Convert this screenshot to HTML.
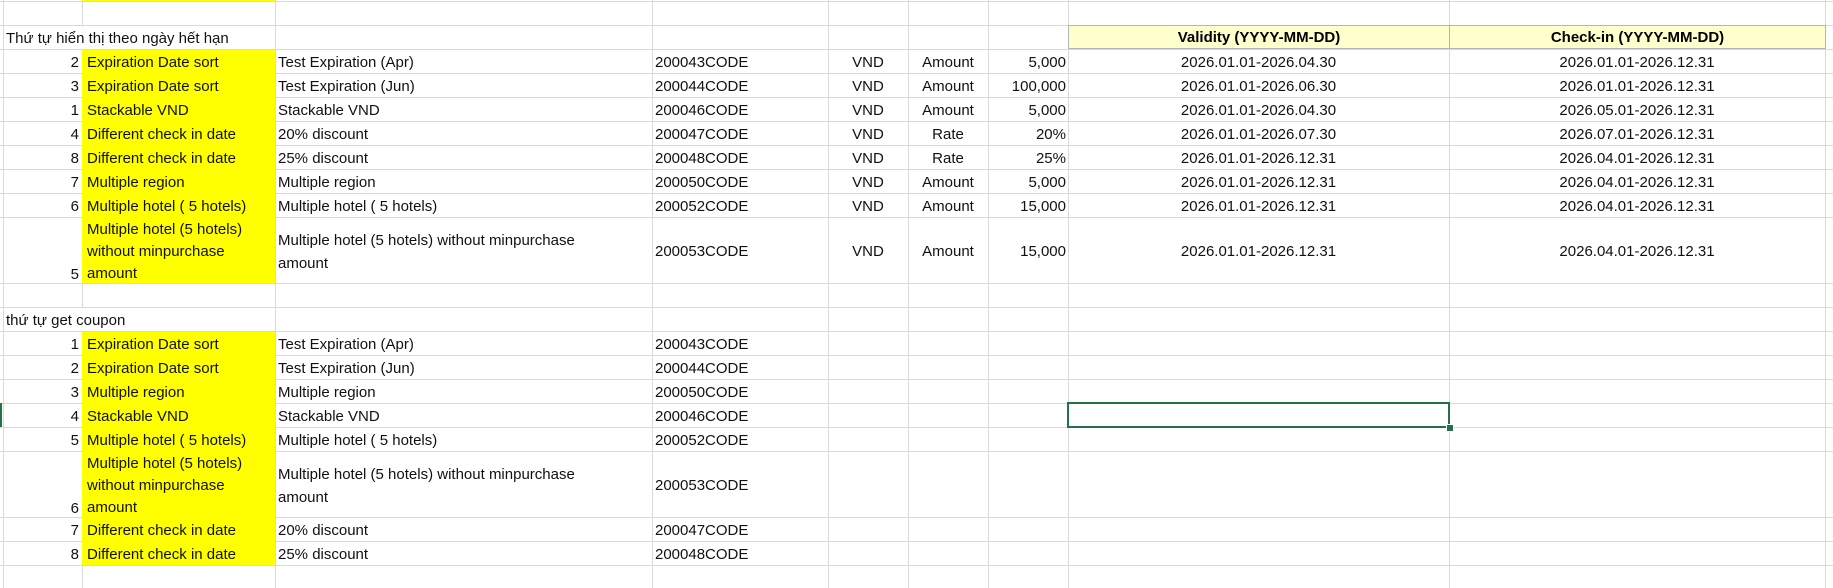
<!DOCTYPE html>
<html><head><meta charset="utf-8">
<style>
html,body{margin:0;padding:0;background:#fff;}
body{width:1833px;height:588px;position:relative;overflow:hidden;font-family:"Liberation Sans",Arial,sans-serif;font-size:15px;color:#000;}
.h{position:absolute;left:0;width:1833px;height:1px;background:#d9d9d9;}
.v{position:absolute;width:1px;background:#d9d9d9;}
.y{position:absolute;left:82px;width:193px;background:#ffff00;}
.t{position:absolute;height:24px;line-height:24px;white-space:nowrap;margin-top:2px;color:#111;}
.r{text-align:right;}
.c{text-align:center;}
.hd{position:absolute;top:25px;height:24px;background:#ffffcc;border:1px solid #b4b4b4;box-sizing:border-box;font-weight:bold;text-align:center;line-height:24px;}
</style></head><body>
<div class="h" style="top:1px"></div>
<div class="h" style="top:25px"></div>
<div class="h" style="top:49px"></div>
<div class="h" style="top:73px"></div>
<div class="h" style="top:97px"></div>
<div class="h" style="top:121px"></div>
<div class="h" style="top:145px"></div>
<div class="h" style="top:169px"></div>
<div class="h" style="top:193px"></div>
<div class="h" style="top:217px"></div>
<div class="h" style="top:283px"></div>
<div class="h" style="top:307px"></div>
<div class="h" style="top:331px"></div>
<div class="h" style="top:355px"></div>
<div class="h" style="top:379px"></div>
<div class="h" style="top:403px"></div>
<div class="h" style="top:427px"></div>
<div class="h" style="top:451px"></div>
<div class="h" style="top:517px"></div>
<div class="h" style="top:541px"></div>
<div class="h" style="top:565px"></div>
<div class="v" style="left:3px;top:0;height:588px"></div>
<div class="v" style="left:82px;top:0;height:25px"></div>
<div class="v" style="left:82px;top:49px;height:258px"></div>
<div class="v" style="left:82px;top:331px;height:257px"></div>
<div class="v" style="left:275px;top:0;height:588px"></div>
<div class="v" style="left:652px;top:0;height:588px"></div>
<div class="v" style="left:828px;top:0;height:588px"></div>
<div class="v" style="left:908px;top:0;height:588px"></div>
<div class="v" style="left:988px;top:0;height:588px"></div>
<div class="v" style="left:1068px;top:0;height:588px"></div>
<div class="v" style="left:1449px;top:0;height:588px"></div>
<div class="v" style="left:1825px;top:0;height:588px"></div>
<div class="y" style="top:0;height:1px"></div>
<div class="y" style="top:50px;height:233px"></div>
<div class="y" style="top:332px;height:233px"></div>
<div class="hd" style="left:1068px;width:382px">Validity (YYYY-MM-DD)</div>
<div class="hd" style="left:1449px;width:377px">Check-in (YYYY-MM-DD)</div>

<div class="t" style="left:6px;top:25px">Thứ tự hiển thị theo ngày hết hạn</div>
<div class="t" style="left:6px;top:307px">thứ tự get coupon</div>

<div class="t r" style="left:3px;width:76px;top:49px">2</div>
<div class="t" style="left:87px;top:49px">Expiration Date sort</div>
<div class="t" style="left:278px;top:49px">Test Expiration (Apr)</div>
<div class="t" style="left:655px;top:49px">200043CODE</div>
<div class="t c" style="left:828px;width:80px;top:49px">VND</div>
<div class="t c" style="left:908px;width:80px;top:49px">Amount</div>
<div class="t r" style="left:988px;width:78px;top:49px">5,000</div>
<div class="t c" style="left:1068px;width:381px;top:49px">2026.01.01-2026.04.30</div>
<div class="t c" style="left:1449px;width:376px;top:49px">2026.01.01-2026.12.31</div>

<div class="t r" style="left:3px;width:76px;top:73px">3</div>
<div class="t" style="left:87px;top:73px">Expiration Date sort</div>
<div class="t" style="left:278px;top:73px">Test Expiration (Jun)</div>
<div class="t" style="left:655px;top:73px">200044CODE</div>
<div class="t c" style="left:828px;width:80px;top:73px">VND</div>
<div class="t c" style="left:908px;width:80px;top:73px">Amount</div>
<div class="t r" style="left:988px;width:78px;top:73px">100,000</div>
<div class="t c" style="left:1068px;width:381px;top:73px">2026.01.01-2026.06.30</div>
<div class="t c" style="left:1449px;width:376px;top:73px">2026.01.01-2026.12.31</div>

<div class="t r" style="left:3px;width:76px;top:97px">1</div>
<div class="t" style="left:87px;top:97px">Stackable VND</div>
<div class="t" style="left:278px;top:97px">Stackable VND</div>
<div class="t" style="left:655px;top:97px">200046CODE</div>
<div class="t c" style="left:828px;width:80px;top:97px">VND</div>
<div class="t c" style="left:908px;width:80px;top:97px">Amount</div>
<div class="t r" style="left:988px;width:78px;top:97px">5,000</div>
<div class="t c" style="left:1068px;width:381px;top:97px">2026.01.01-2026.04.30</div>
<div class="t c" style="left:1449px;width:376px;top:97px">2026.05.01-2026.12.31</div>

<div class="t r" style="left:3px;width:76px;top:121px">4</div>
<div class="t" style="left:87px;top:121px">Different check in date</div>
<div class="t" style="left:278px;top:121px">20% discount</div>
<div class="t" style="left:655px;top:121px">200047CODE</div>
<div class="t c" style="left:828px;width:80px;top:121px">VND</div>
<div class="t c" style="left:908px;width:80px;top:121px">Rate</div>
<div class="t r" style="left:988px;width:78px;top:121px">20%</div>
<div class="t c" style="left:1068px;width:381px;top:121px">2026.01.01-2026.07.30</div>
<div class="t c" style="left:1449px;width:376px;top:121px">2026.07.01-2026.12.31</div>

<div class="t r" style="left:3px;width:76px;top:145px">8</div>
<div class="t" style="left:87px;top:145px">Different check in date</div>
<div class="t" style="left:278px;top:145px">25% discount</div>
<div class="t" style="left:655px;top:145px">200048CODE</div>
<div class="t c" style="left:828px;width:80px;top:145px">VND</div>
<div class="t c" style="left:908px;width:80px;top:145px">Rate</div>
<div class="t r" style="left:988px;width:78px;top:145px">25%</div>
<div class="t c" style="left:1068px;width:381px;top:145px">2026.01.01-2026.12.31</div>
<div class="t c" style="left:1449px;width:376px;top:145px">2026.04.01-2026.12.31</div>

<div class="t r" style="left:3px;width:76px;top:169px">7</div>
<div class="t" style="left:87px;top:169px">Multiple region</div>
<div class="t" style="left:278px;top:169px">Multiple region</div>
<div class="t" style="left:655px;top:169px">200050CODE</div>
<div class="t c" style="left:828px;width:80px;top:169px">VND</div>
<div class="t c" style="left:908px;width:80px;top:169px">Amount</div>
<div class="t r" style="left:988px;width:78px;top:169px">5,000</div>
<div class="t c" style="left:1068px;width:381px;top:169px">2026.01.01-2026.12.31</div>
<div class="t c" style="left:1449px;width:376px;top:169px">2026.04.01-2026.12.31</div>

<div class="t r" style="left:3px;width:76px;top:193px">6</div>
<div class="t" style="left:87px;top:193px">Multiple hotel ( 5 hotels)</div>
<div class="t" style="left:278px;top:193px">Multiple hotel ( 5 hotels)</div>
<div class="t" style="left:655px;top:193px">200052CODE</div>
<div class="t c" style="left:828px;width:80px;top:193px">VND</div>
<div class="t c" style="left:908px;width:80px;top:193px">Amount</div>
<div class="t r" style="left:988px;width:78px;top:193px">15,000</div>
<div class="t c" style="left:1068px;width:381px;top:193px">2026.01.01-2026.12.31</div>
<div class="t c" style="left:1449px;width:376px;top:193px">2026.04.01-2026.12.31</div>

<div class="t r" style="left:3px;width:76px;top:261px">5</div>
<div class="t" style="left:87px;top:217px;height:66px;line-height:22px">Multiple hotel (5 hotels)<br>without minpurchase<br>amount</div>
<div class="t" style="left:278px;top:227px;height:46px;line-height:23px">Multiple hotel (5 hotels) without minpurchase<br>amount</div>
<div class="t" style="left:655px;top:238px">200053CODE</div>
<div class="t c" style="left:828px;width:80px;top:238px">VND</div>
<div class="t c" style="left:908px;width:80px;top:238px">Amount</div>
<div class="t r" style="left:988px;width:78px;top:238px">15,000</div>
<div class="t c" style="left:1068px;width:381px;top:238px">2026.01.01-2026.12.31</div>
<div class="t c" style="left:1449px;width:376px;top:238px">2026.04.01-2026.12.31</div>

<div class="t r" style="left:3px;width:76px;top:331px">1</div>
<div class="t" style="left:87px;top:331px">Expiration Date sort</div>
<div class="t" style="left:278px;top:331px">Test Expiration (Apr)</div>
<div class="t" style="left:655px;top:331px">200043CODE</div>

<div class="t r" style="left:3px;width:76px;top:355px">2</div>
<div class="t" style="left:87px;top:355px">Expiration Date sort</div>
<div class="t" style="left:278px;top:355px">Test Expiration (Jun)</div>
<div class="t" style="left:655px;top:355px">200044CODE</div>

<div class="t r" style="left:3px;width:76px;top:379px">3</div>
<div class="t" style="left:87px;top:379px">Multiple region</div>
<div class="t" style="left:278px;top:379px">Multiple region</div>
<div class="t" style="left:655px;top:379px">200050CODE</div>

<div class="t r" style="left:3px;width:76px;top:403px">4</div>
<div class="t" style="left:87px;top:403px">Stackable VND</div>
<div class="t" style="left:278px;top:403px">Stackable VND</div>
<div class="t" style="left:655px;top:403px">200046CODE</div>

<div class="t r" style="left:3px;width:76px;top:427px">5</div>
<div class="t" style="left:87px;top:427px">Multiple hotel ( 5 hotels)</div>
<div class="t" style="left:278px;top:427px">Multiple hotel ( 5 hotels)</div>
<div class="t" style="left:655px;top:427px">200052CODE</div>

<div class="t r" style="left:3px;width:76px;top:495px">6</div>
<div class="t" style="left:87px;top:451px;height:66px;line-height:22px">Multiple hotel (5 hotels)<br>without minpurchase<br>amount</div>
<div class="t" style="left:278px;top:461px;height:46px;line-height:23px">Multiple hotel (5 hotels) without minpurchase<br>amount</div>
<div class="t" style="left:655px;top:472px">200053CODE</div>

<div class="t r" style="left:3px;width:76px;top:517px">7</div>
<div class="t" style="left:87px;top:517px">Different check in date</div>
<div class="t" style="left:278px;top:517px">20% discount</div>
<div class="t" style="left:655px;top:517px">200047CODE</div>

<div class="t r" style="left:3px;width:76px;top:541px">8</div>
<div class="t" style="left:87px;top:541px">Different check in date</div>
<div class="t" style="left:278px;top:541px">25% discount</div>
<div class="t" style="left:655px;top:541px">200048CODE</div>

<div style="position:absolute;left:1067px;top:402px;width:383px;height:26px;box-sizing:border-box;border:2px solid #217346;"></div>
<div style="position:absolute;left:1446px;top:424px;width:6px;height:6px;background:#217346;border:1px solid #fff;"></div>
<div style="position:absolute;left:0;top:403px;width:2px;height:24px;background:#217346;"></div>
</body></html>
